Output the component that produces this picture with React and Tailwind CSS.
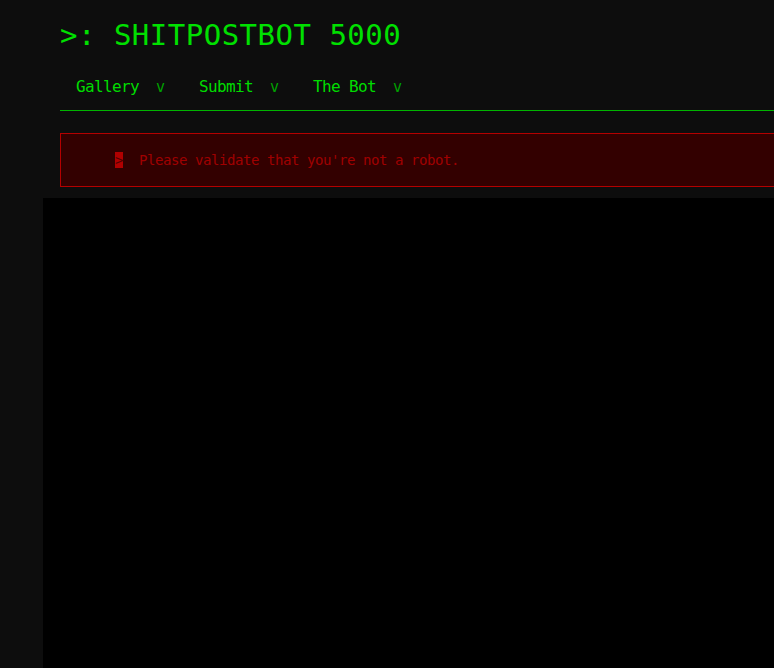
export default function App() {
  const nav = ["Gallery", "Submit", "The Bot"];

  return (
    <div className="h-[668px] overflow-hidden bg-[#0d0d0d] font-['DejaVu_Sans_Mono',monospace] flex flex-col">
      <div className="pl-[60px]">
        {/* Title */}
        <h1 className="pt-[17px] text-[29px] leading-[36px] tracking-[0.5px] text-[#00e000] whitespace-nowrap">
          &gt;: SHITPOSTBOT 5000
        </h1>
        {/* Nav */}
        <nav className="mt-[22px] w-[760px] flex border-b border-[#00b400] pb-[11px]">
          {nav.map((item) => (
            <div
              key={item}
              className="flex pl-4 pr-[18px] text-[16px] leading-[24px] tracking-[-0.63px] whitespace-nowrap"
            >
              <span className="text-[#00dc00]">{item}</span>
              <span className="ml-[17px] w-[9px] text-[#00a000] text-[15px]">v</span>
            </div>
          ))}
        </nav>
        {/* Error message */}
        <div className="mt-[22px] w-[760px] border border-[#b40000] bg-[#330000] py-4 pl-[54px] text-[14px] leading-[20px] tracking-[-0.43px] text-[#a00000] whitespace-nowrap">
          <span className="bg-[#b00000] text-[#500000]">&gt;</span>
          <span className="ml-4">Please validate that you're not a robot.</span>
        </div>
      </div>
      {/* Content area */}
      <div className="ml-[43px] mt-[11px] flex-1 bg-black" />
    </div>
  );
}
